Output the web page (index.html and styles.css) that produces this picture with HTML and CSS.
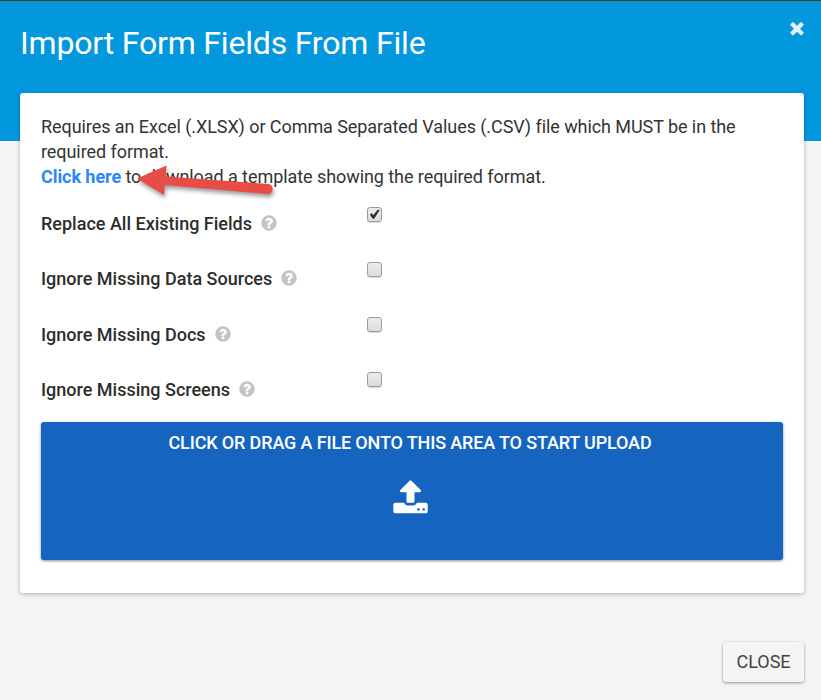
FILE: index.html
```html
<!DOCTYPE html>
<html lang="en">
<head>
<meta charset="utf-8">
<title>Import Form Fields From File</title>
<link rel="stylesheet" href="styles.css">
</head>
<body>
<svg width="0" height="0" class="defs">
  <symbol id="help" viewBox="0 0 1792 1792"><path d="M1024 1376v-192q0-14-9-23t-23-9h-192q-14 0-23 9t-9 23v192q0 14 9 23t23 9h192q14 0 23-9t9-23zm256-672q0-88-55.500-163t-138.500-116-170-41q-243 0-371 213-15 24 8 42l132 100q7 6 19 6 16 0 25-12 53-68 86-92 34-24 86-24 48 0 85.500 26t37.500 59q0 38-20 61t-68 45q-63 28-115.500 86.500t-52.500 125.500v36q0 14 9 23t23 9h192q14 0 23-9t9-23q0-19 21.500-49.500t54.500-49.500q32-18 49-28.500t46-35 44.500-48 28-60.500 12.500-81zm384 192q0 209-103 385.500t-279.500 279.500-385.500 103-385.500-103-279.500-279.500-103-385.500 103-385.500 279.500-279.500 385.500-103 385.500 103 279.500 279.500 103 385.500z"/></symbol>
</svg>
<div class="dialog">
  <header class="header">
    <h1 class="title">Import Form Fields From File</h1>
    <svg class="dismiss" viewBox="0 0 1792 1792"><path d="M1490 1322q0 40-28 68l-136 136q-28 28-68 28t-68-28l-294-294-294 294q-28 28-68 28t-68-28l-136-136q-28-28-28-68t28-68l294-294-294-294q-28-28-28-68t28-68l136-136q28-28 68-28t68 28l294 294 294-294q28-28 68-28t68 28l136 136q28 28 28 68t-28 68l-294 294 294 294q28 28 28 68z"/></svg>
  </header>
  <main class="card">
    <p class="intro">Requires an Excel (.XLSX) or Comma Separated Values (.CSV) file which MUST be in the required format.<br><a class="link">Click here</a> to download a template showing the required format.
      <svg class="arrow" viewBox="0 0 150 50" width="150" height="50"><path d="M11 19.500L40.500 6.500L39.700 17.500L142.500 25Q147 26 146.500 30.500Q146 35 141.500 35L38.700 26L38 36Z" class="arrow-shape"/></svg>
    </p>
    <div class="options">
      <div class="option"><span class="label">Replace All Existing Fields</span><svg class="help"><use href="#help"/></svg><span class="check"><svg class="tick" viewBox="0 0 16 16"><path d="M3 8L5.100 6.600L6.800 8.600L11.300 2.800L13.600 3.300L7.700 12.400H6Z"/></svg></span></div>
      <div class="option"><span class="label">Ignore Missing Data Sources</span><svg class="help"><use href="#help"/></svg><span class="check"></span></div>
      <div class="option option-low"><span class="label">Ignore Missing Docs</span><svg class="help"><use href="#help"/></svg><span class="check"></span></div>
      <div class="option option-low"><span class="label">Ignore Missing Screens</span><svg class="help"><use href="#help"/></svg><span class="check"></span></div>
    </div>
    <div class="dropzone">
      <span>CLICK OR DRAG A FILE ONTO THIS AREA TO START UPLOAD</span>
      <svg class="upload" viewBox="0 0 1792 1792"><path d="M1344 1472q0-26-19-45t-45-19-45 19-19 45 19 45 45 19 45-19 19-45zm256 0q0-26-19-45t-45-19-45 19-19 45 19 45 45 19 45-19 19-45zm128-224v320q0 40-28 68t-68 28h-1472q-40 0-68-28t-28-68v-320q0-40 28-68t68-28h427q21 56 70.500 92t110.500 36h256q61 0 110.500-36t70.500-92h427q40 0 68 28t28 68zm-325-648q-17 40-59 40h-256v448q0 26-19 45t-45 19h-256q-26 0-45-19t-19-45v-448h-256q-42 0-59-40-17-39 14-69l448-448q18-19 45-19t45 19l448 448q31 30 14 69z"/></svg>
    </div>
  </main>
  <footer class="footer"><button class="close">CLOSE</button></footer>
</div>
</body>
</html>
```
FILE: styles.css
```css
* { box-sizing: border-box; }
body {
  margin: 0;
  height: 700px;
  overflow: hidden;
  background: #f4f4f4;
  color: #333;
  font: 18px/25px Roboto, "Liberation Sans", sans-serif;
}
.defs { position: absolute; }
.dialog { height: 700px; border-top: 1px solid #5b3a1e; }
.header {
  display: flex;
  justify-content: space-between;
  align-items: flex-start;
  height: 140px;
  padding: 20px 14px 0 20px;
  background: #0398dd;
  color: #fff;
}
.title { margin: 0; font-size: 32px; line-height: 44px; font-weight: 400; letter-spacing: -.18px; }
.dismiss { width: 20px; height: 20px; margin-top: -3.500px; fill: #e3f3fc; }
.card {
  height: 500px;
  margin: -48px 17px 0 20px;
  padding: 21px;
  border-radius: 3px;
  background: #fff;
  box-shadow: 0 1px 4px rgba(0, 0, 0, .3);
}
.intro { position: relative; margin: 0; height: 75px; letter-spacing: -.068px; }
.link { color: #2d87f8; font-weight: 700; }
.arrow { position: absolute; left: 85px; top: 45px; filter: drop-shadow(1px 3px 2px rgba(0, 0, 0, .4)); }
.arrow-shape { fill: #e94b45; }
.options { height: 233px; padding-top: 8px; }
.option {
  display: grid;
  grid-template-columns: auto 18px 1fr;
  position: relative;
  height: 55px;
  padding-top: 14px;
}
.option-low { padding-top: 15px; }
.label { font-weight: 500; color: #2d2d2d; }
.help { width: 18px; height: 18px; margin: 3px 0 0 8px; fill: #c4c4c4; overflow: visible; }
.check {
  position: absolute;
  left: 326px;
  top: 10px;
  width: 15px;
  height: 15px;
  border: 1px solid #9c9c9c;
  border-radius: 3px;
  background: linear-gradient(#ececec, #dcdcdc);
  box-shadow: 0 1px 1px rgba(0, 0, 0, .15);
}
.tick { display: block; width: 15px; height: 15px; margin: -1px; fill: #333; }
.dropzone {
  display: flex;
  flex-direction: column;
  align-items: center;
  height: 138px;
  padding: 8px 4px 0 0;
  border-radius: 3px;
  background: #1565c0;
  color: #fff;
  font-weight: 500;
  letter-spacing: -.14px;
  box-shadow: 0 1px 3px rgba(0, 0, 0, .45);
}
.upload { width: 37px; height: 37px; margin-top: 24px; fill: #fff; }
.footer { display: flex; justify-content: flex-end; padding: 49px 17px 0; }
.close {
  width: 81px;
  height: 40px;
  padding: 0 0 2px;
  border: 0;
  border-radius: 3px;
  background: #f4f4f4;
  color: #444;
  font: inherit;
  box-shadow: 0 1px 3px rgba(0, 0, 0, .4);
}
```
